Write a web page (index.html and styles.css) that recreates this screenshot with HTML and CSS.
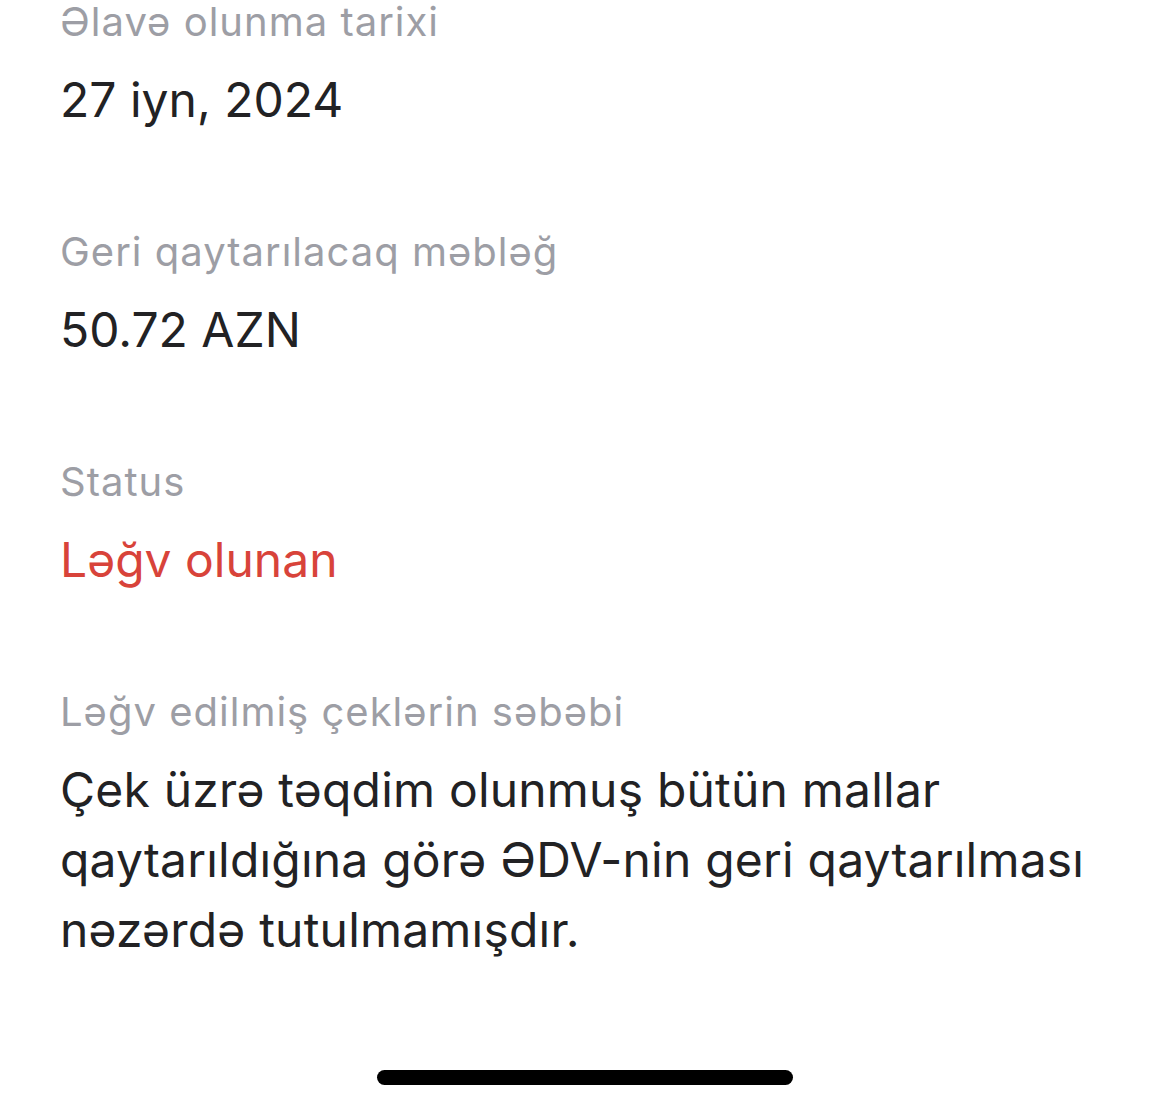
FILE: index.html
```html
<!DOCTYPE html>
<html lang="az">
<head>
<meta charset="utf-8">
<title>Çek</title>
<link rel="stylesheet" href="styles.css">
</head>
<body>
<main class="details">
  <section class="field field-first">
    <div class="label">Əlavə olunma tarixi</div>
    <div class="value">27 iyn, 2024</div>
  </section>
  <section class="field">
    <div class="label">Geri qaytarılacaq məbləğ</div>
    <div class="value">50.72 AZN</div>
  </section>
  <section class="field">
    <div class="label">Status</div>
    <div class="value value-red">Ləğv olunan</div>
  </section>
  <section class="field">
    <div class="label">Ləğv edilmiş çeklərin səbəbi</div>
    <div class="value value-text">Çek üzrə təqdim olunmuş bütün mallar qaytarıldığına görə ƏDV-nin geri qaytarılması nəzərdə tutulmamışdır.</div>
  </section>
</main>
<div class="home-bar"><span class="home-indicator"></span></div>
</body>
</html>
```
FILE: styles.css
```css
html, body {
  margin: 0;
  padding: 0;
  background: #ffffff;
}
body {
  font-family: Inter, "Noto Sans", "Liberation Sans", sans-serif;
  width: 1170px;
  height: 1109px;
  overflow: hidden;
  position: relative;
}
.details {
  padding: 0 60px;
  display: flex;
  flex-direction: column;
  gap: 92px;
}
.field {
  display: flex;
  flex-direction: column;
  gap: 18px;
}
.field-first {
  margin-top: -3px;
}
.label {
  font-size: 40px;
  line-height: 50px;
  letter-spacing: 1px;
  color: #9d9ea5;
}
.value {
  font-size: 48px;
  line-height: 70px;
  color: #222224;
  max-width: 1050px;
}
.value-text {
  letter-spacing: 0.2px;
}
.value-red {
  color: #d8433a;
}
.home-bar {
  position: absolute;
  left: 0;
  right: 0;
  top: 1070px;
  display: flex;
  justify-content: center;
}
.home-indicator {
  display: block;
  width: 416px;
  height: 15px;
  border-radius: 8px;
  background: #000;
}
```
